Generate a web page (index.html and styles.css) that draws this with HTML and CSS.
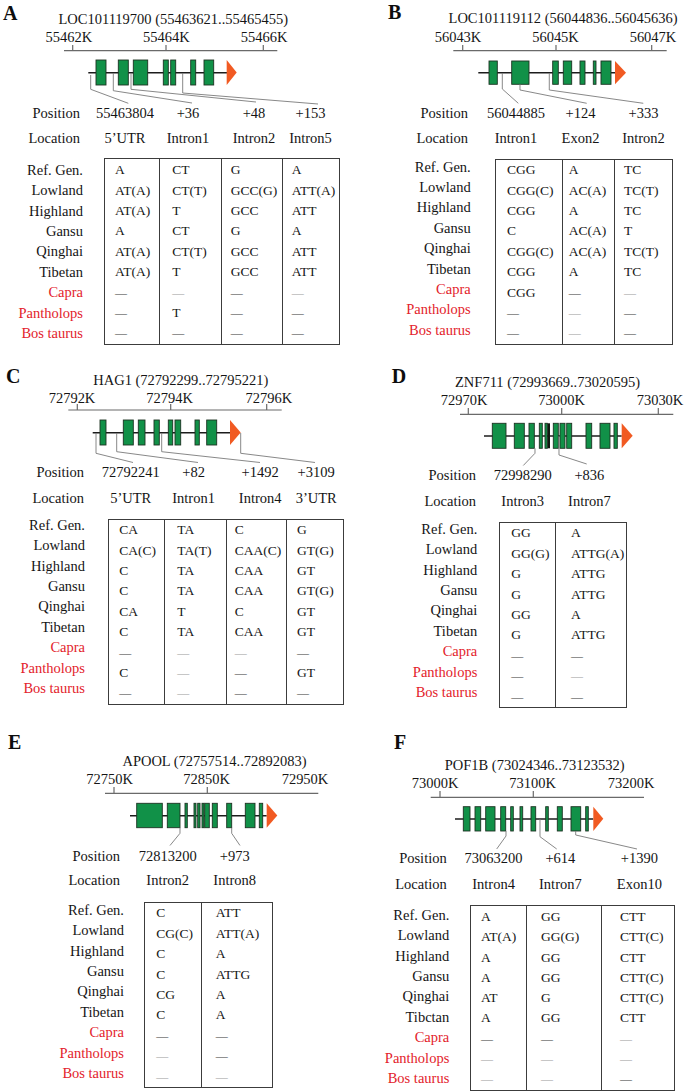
FILE: index.html
```html
<!DOCTYPE html>
<html lang="en">
<head>
<meta charset="utf-8">
<title>SNP figure</title>
<link rel="stylesheet" href="styles.css">
</head>
<body>
<div class="fig">

<!-- A -->
<section class="panel pa">
<svg class="dg" width="340" height="104" viewBox="0 0 340 104">
<text class="lt" x="3" y="20">A</text>
<text class="t" x="173.3" y="24" text-anchor="middle">LOC101119700 (55463621..55465455)</text>
<text class="t" x="68.8" y="41.5" text-anchor="middle">55462K</text>
<text class="t" x="166.3" y="41.5" text-anchor="middle">55464K</text>
<text class="t" x="264" y="41.5" text-anchor="middle">55466K</text>
<path class="ax" d="M64 50.7H277.3M72.7 45V50.7M166 45V50.7M263.3 45V50.7"/>
<path class="gl" d="M88.3 72.7H227"/>
<rect class="ex" x="96" y="60" width="10" height="25"/>
<rect class="ex" x="118.3" y="60" width="10" height="25"/>
<rect class="ex" x="133.3" y="60" width="14.4" height="25"/>
<rect class="ex" x="163.3" y="60" width="5" height="25"/>
<rect class="ex" x="170.7" y="60" width="5" height="25"/>
<rect class="ex" x="190.7" y="60" width="5" height="25"/>
<rect class="ex" x="204" y="60" width="9.7" height="25"/>
<path class="ar" d="M226.7 60L236.7 72.5L226.7 85Z"/>
<path class="cn" d="M90.7 75V89.3L128.3 103.3M113.3 73V90.7L192 103M131 73V89.3L256 102M182.7 73V93L318 104"/>
</svg>
<div class="info r1"><span class="k">Position</span><span class="v">55463804</span><span class="v">+36</span><span class="v">+48</span><span class="v">+153</span></div>
<div class="info r2"><span class="k">Location</span><span class="v">5’UTR</span><span class="v">Intron1</span><span class="v">Intron2</span><span class="v">Intron5</span></div>
<div class="sect">
<div class="labels"><div class="lab">Ref. Gen.</div><div class="lab">Lowland</div><div class="lab">Highland</div><div class="lab">Gansu</div><div class="lab">Qinghai</div><div class="lab">Tibetan</div><div class="lab red">Capra</div><div class="lab red">Pantholops</div><div class="lab red">Bos taurus</div></div>
<div class="tbl">
<div class="col"><div class="c">A</div><div class="c">AT(A)</div><div class="c">AT(A)</div><div class="c">A</div><div class="c">AT(A)</div><div class="c">AT(A)</div><div class="c"><span class="d">—</span></div><div class="c"><span class="d">—</span></div><div class="c"><span class="d">—</span></div></div>
<div class="col"><div class="c">CT</div><div class="c">CT(T)</div><div class="c">T</div><div class="c">CT</div><div class="c">CT(T)</div><div class="c">T</div><div class="c"><span class="d dl">—</span></div><div class="c">T</div><div class="c"><span class="d">—</span></div></div>
<div class="col"><div class="c">G</div><div class="c">GCC(G)</div><div class="c">GCC</div><div class="c">G</div><div class="c">GCC</div><div class="c">GCC</div><div class="c"><span class="d">—</span></div><div class="c"><span class="d">—</span></div><div class="c"><span class="d">—</span></div></div>
<div class="col"><div class="c">A</div><div class="c">ATT(A)</div><div class="c">ATT</div><div class="c">A</div><div class="c">ATT</div><div class="c">ATT</div><div class="c"><span class="d dl">—</span></div><div class="c"><span class="d">—</span></div><div class="c"><span class="d">—</span></div></div>
</div>
</div>
</section>

<!-- B -->
<section class="panel pb">
<svg class="dg" width="345" height="104.4" viewBox="0 0 345 104.4">
<text class="lt" x="48" y="19">B</text>
<text class="t" x="223" y="23.5" text-anchor="middle">LOC101119112 (56044836..56045636)</text>
<text class="t" x="118" y="41.7" text-anchor="middle">56043K</text>
<text class="t" x="215.5" y="41.7" text-anchor="middle">56045K</text>
<text class="t" x="313" y="41.7" text-anchor="middle">56047K</text>
<path class="ax" d="M113.3 50.7H326.7M122.7 45V50.7M216 45V50.7M311.7 45V50.7"/>
<path class="gl" d="M138.3 72.7H275"/>
<rect class="ex" x="149" y="61" width="8.3" height="23.3"/>
<rect class="ex" x="171.7" y="61" width="17.3" height="23.3"/>
<rect class="ex" x="212.7" y="61" width="5.6" height="23.3"/>
<rect class="ex" x="223.3" y="61" width="8.4" height="23.3"/>
<rect class="ex" x="240" y="61" width="5" height="23.3"/>
<rect class="ex" x="253.3" y="61" width="2.7" height="23.3"/>
<rect class="ex" x="261" y="61" width="10" height="23.3"/>
<path class="ar" d="M275 61L286 72.7L275 84.3Z"/>
<path class="cn" d="M162.3 73V89L178.3 103.3M180 84.3V90L246.7 103.3M209.3 73V90L303.3 103.3"/>
</svg>
<div class="info r1"><span class="k">Position</span><span class="v">56044885</span><span class="v">+124</span><span class="v">+333</span></div>
<div class="info r2"><span class="k">Location</span><span class="v">Intron1</span><span class="v">Exon2</span><span class="v">Intron2</span></div>
<div class="sect">
<div class="labels"><div class="lab">Ref. Gen.</div><div class="lab">Lowland</div><div class="lab">Highland</div><div class="lab">Gansu</div><div class="lab">Qinghai</div><div class="lab">Tibetan</div><div class="lab red">Capra</div><div class="lab red">Pantholops</div><div class="lab red">Bos taurus</div></div>
<div class="tbl">
<div class="col"><div class="c">CGG</div><div class="c">CGG(C)</div><div class="c">CGG</div><div class="c">C</div><div class="c">CGG(C)</div><div class="c">CGG</div><div class="c">CGG</div><div class="c"><span class="d">—</span></div><div class="c"><span class="d">—</span></div></div>
<div class="col"><div class="c">A</div><div class="c">AC(A)</div><div class="c">A</div><div class="c">AC(A)</div><div class="c">AC(A)</div><div class="c">A</div><div class="c"><span class="d">—</span></div><div class="c"><span class="d dl">—</span></div><div class="c"><span class="d dl">—</span></div></div>
<div class="col"><div class="c">TC</div><div class="c">TC(T)</div><div class="c">TC</div><div class="c">T</div><div class="c">TC(T)</div><div class="c">TC</div><div class="c"><span class="d dl">—</span></div><div class="c"><span class="d">—</span></div><div class="c"><span class="d">—</span></div></div>
</div>
</div>
</section>

<!-- C -->
<section class="panel pc">
<svg class="dg" width="340" height="102.8" viewBox="0 0 340 102.8">
<text class="lt" x="6" y="23.3">C</text>
<text class="t" x="180.8" y="25" text-anchor="middle">HAG1 (72792299..72795221)</text>
<text class="t" x="72" y="42.7" text-anchor="middle">72792K</text>
<text class="t" x="169.7" y="42.7" text-anchor="middle">72794K</text>
<text class="t" x="268.8" y="42.7" text-anchor="middle">72796K</text>
<path class="ax" d="M68.3 50H281.7M77.3 44V50M170.7 44V50M266.7 44V50"/>
<path class="gl" d="M92.7 72.7H230"/>
<rect class="ex" x="100" y="60" width="6" height="25"/>
<rect class="ex" x="123.3" y="60" width="10" height="25"/>
<rect class="ex" x="138.3" y="60" width="6.7" height="25"/>
<rect class="ex" x="154" y="60" width="5.3" height="25"/>
<rect class="ex" x="168.3" y="60" width="4.4" height="25"/>
<rect class="ex" x="175" y="60" width="5.7" height="25"/>
<rect class="ex" x="195" y="60" width="4.3" height="25"/>
<rect class="ex" x="206.7" y="60" width="10" height="25"/>
<path class="ar" d="M230 60L240.7 72.5L230 85Z"/>
<path class="cn" d="M96 73V93.3L133 102.5M116.7 73V91.7L198 102.5M161.7 73V91.7L260 102.5M240.7 73V93.3L315 102.5"/>
</svg>
<div class="info r1"><span class="k">Position</span><span class="v">72792241</span><span class="v">+82</span><span class="v">+1492</span><span class="v">+3109</span></div>
<div class="info r2"><span class="k">Location</span><span class="v">5’UTR</span><span class="v">Intron1</span><span class="v">Intron4</span><span class="v">3’UTR</span></div>
<div class="sect">
<div class="labels"><div class="lab">Ref. Gen.</div><div class="lab">Lowland</div><div class="lab">Highland</div><div class="lab">Gansu</div><div class="lab">Qinghai</div><div class="lab">Tibetan</div><div class="lab red">Capra</div><div class="lab red">Pantholops</div><div class="lab red">Bos taurus</div></div>
<div class="tbl">
<div class="col"><div class="c">CA</div><div class="c">CA(C)</div><div class="c">C</div><div class="c">C</div><div class="c">CA</div><div class="c">C</div><div class="c"><span class="d">—</span></div><div class="c">C</div><div class="c"><span class="d">—</span></div></div>
<div class="col"><div class="c">TA</div><div class="c">TA(T)</div><div class="c">TA</div><div class="c">TA</div><div class="c">T</div><div class="c">TA</div><div class="c"><span class="d dl">—</span></div><div class="c"><span class="d dl">—</span></div><div class="c"><span class="d dl">—</span></div></div>
<div class="col"><div class="c">C</div><div class="c">CAA(C)</div><div class="c">CAA</div><div class="c">CAA</div><div class="c">C</div><div class="c">CAA</div><div class="c"><span class="d dl">—</span></div><div class="c"><span class="d">—</span></div><div class="c"><span class="d">—</span></div></div>
<div class="col"><div class="c">G</div><div class="c">GT(G)</div><div class="c">GT</div><div class="c">GT(G)</div><div class="c">GT</div><div class="c">GT</div><div class="c"><span class="d">—</span></div><div class="c">GT</div><div class="c"><span class="d">—</span></div></div>
</div>
</div>
</section>

<!-- D -->
<section class="panel pd">
<svg class="dg" width="345" height="106.1" viewBox="0 0 345 106.1">
<text class="lt" x="51.7" y="23.3">D</text>
<text class="t" x="207.5" y="26.7" text-anchor="middle">ZNF711 (72993669..73020595)</text>
<text class="t" x="124" y="45" text-anchor="middle">72970K</text>
<text class="t" x="221.7" y="45" text-anchor="middle">73000K</text>
<text class="t" x="320" y="45" text-anchor="middle">73030K</text>
<path class="ax" d="M120 54.3H333.3M128.3 48V54.3M221.7 48V54.3M318.3 48V54.3"/>
<path class="gl" d="M144 76H281.7"/>
<rect class="ex" x="152.3" y="63.3" width="13.7" height="25"/>
<rect class="ex" x="174.3" y="63.3" width="10" height="25"/>
<rect class="ex" x="189" y="63.3" width="5.3" height="25"/>
<rect class="ex" x="199.3" y="63.3" width="3" height="25"/>
<rect class="ex" x="205" y="63.3" width="2.3" height="25"/>
<rect class="exk" x="207.5" y="63.3" width="2.5" height="25"/>
<rect class="ex" x="213.3" y="63.3" width="5" height="25"/>
<rect class="ex" x="220" y="63.3" width="5" height="25"/>
<rect class="ex" x="226.7" y="63.3" width="5" height="25"/>
<rect class="ex" x="246" y="63.3" width="5.7" height="25"/>
<rect class="ex" x="260" y="63.3" width="10" height="25"/>
<rect class="ex" x="274" y="63.3" width="3.3" height="25"/>
<path class="ar" d="M281.7 63.3L292.7 75.8L281.7 88.3Z"/>
<path class="cn" d="M195 88.3V93.3L183.3 105.5M219 76V95L246.7 104"/>
</svg>
<div class="info r1"><span class="k">Position</span><span class="v">72998290</span><span class="v">+836</span></div>
<div class="info r2"><span class="k">Location</span><span class="v">Intron3</span><span class="v">Intron7</span></div>
<div class="sect">
<div class="labels"><div class="lab">Ref. Gen.</div><div class="lab">Lowland</div><div class="lab">Highland</div><div class="lab">Gansu</div><div class="lab">Qinghai</div><div class="lab">Tibetan</div><div class="lab red">Capra</div><div class="lab red">Pantholops</div><div class="lab red">Bos taurus</div></div>
<div class="tbl">
<div class="col"><div class="c">GG</div><div class="c">GG(G)</div><div class="c">G</div><div class="c">G</div><div class="c">GG</div><div class="c">G</div><div class="c"><span class="d">—</span></div><div class="c"><span class="d">—</span></div><div class="c"><span class="d">—</span></div></div>
<div class="col"><div class="c">A</div><div class="c">ATTG(A)</div><div class="c">ATTG</div><div class="c">ATTG</div><div class="c">A</div><div class="c">ATTG</div><div class="c"><span class="d">—</span></div><div class="c"><span class="d dl">—</span></div><div class="c"><span class="d">—</span></div></div>
</div>
</div>
</section>

<!-- E -->
<section class="panel pe">
<svg class="dg" width="340" height="121.8" viewBox="0 0 340 121.8">
<text class="lt" x="8" y="24.3">E</text>
<text class="t" x="214.5" y="41" text-anchor="middle">APOOL (72757514..72892083)</text>
<text class="t" x="109.7" y="59.3" text-anchor="middle">72750K</text>
<text class="t" x="206.7" y="59.3" text-anchor="middle">72850K</text>
<text class="t" x="305" y="59.3" text-anchor="middle">72950K</text>
<path class="ax" d="M105 68.3H318.3M114 62V68.3M207.3 62V68.3"/>
<path class="gl" d="M130 90.7H266.7"/>
<rect class="ex" x="136.7" y="78.3" width="25.6" height="24.4"/>
<rect class="ex" x="167.3" y="78.3" width="12.7" height="24.4"/>
<rect class="ex" x="185" y="78.3" width="2.3" height="24.4"/>
<rect class="ex" x="194" y="78.3" width="2" height="24.4"/>
<rect class="ex" x="197.7" y="78.3" width="2.3" height="24.4"/>
<rect class="ex" x="202" y="78.3" width="2" height="24.4"/>
<rect class="ex" x="204.7" y="78.3" width="4.6" height="24.4"/>
<rect class="ex" x="212.3" y="78.3" width="5" height="24.4"/>
<rect class="ex" x="226.7" y="78.3" width="5" height="24.4"/>
<rect class="ex" x="245.3" y="78.3" width="9.7" height="24.4"/>
<rect class="ex" x="259.3" y="78.3" width="3.4" height="24.4"/>
<path class="ar" d="M266.7 78.3L277.3 90.5L266.7 102.7Z"/>
<path class="cn" d="M180 102.7V108.3L170 120.5M231.7 102.7V108.3L240 120.5"/>
</svg>
<div class="info r1"><span class="k">Position</span><span class="v">72813200</span><span class="v">+973</span></div>
<div class="info r2"><span class="k">Location</span><span class="v">Intron2</span><span class="v">Intron8</span></div>
<div class="sect">
<div class="labels"><div class="lab">Ref. Gen.</div><div class="lab">Lowland</div><div class="lab">Highland</div><div class="lab">Gansu</div><div class="lab">Qinghai</div><div class="lab">Tibetan</div><div class="lab red">Capra</div><div class="lab red">Pantholops</div><div class="lab red">Bos taurus</div></div>
<div class="tbl">
<div class="col"><div class="c">C</div><div class="c">CG(C)</div><div class="c">C</div><div class="c">C</div><div class="c">CG</div><div class="c">C</div><div class="c"><span class="d">—</span></div><div class="c"><span class="d dl">—</span></div><div class="c"><span class="d dl">—</span></div></div>
<div class="col"><div class="c">ATT</div><div class="c">ATT(A)</div><div class="c">A</div><div class="c">ATTG</div><div class="c">A</div><div class="c">A</div><div class="c"><span class="d">—</span></div><div class="c"><span class="d">—</span></div><div class="c"><span class="d dl">—</span></div></div>
</div>
</div>
</section>

<!-- F -->
<section class="panel pf">
<svg class="dg" width="345" height="124.4" viewBox="0 0 345 124.4">
<text class="lt" x="54" y="24.3">F</text>
<text class="t" x="194.7" y="45" text-anchor="middle">POF1B (73024346..73123532)</text>
<text class="t" x="95" y="63.3" text-anchor="middle">73000K</text>
<text class="t" x="192.7" y="63.3" text-anchor="middle">73100K</text>
<text class="t" x="291.2" y="63.3" text-anchor="middle">73200K</text>
<path class="ax" d="M90.7 72.3H304M100 66V72.3M193.3 66V72.3"/>
<path class="gl" d="M115 94H253.3"/>
<rect class="ex" x="123.3" y="81.7" width="6.7" height="24.3"/>
<rect class="ex" x="135" y="81.7" width="5.7" height="24.3"/>
<rect class="ex" x="145.7" y="81.7" width="9.3" height="24.3"/>
<rect class="ex" x="160.7" y="81.7" width="5" height="24.3"/>
<rect class="ex" x="170.7" y="81.7" width="2.6" height="24.3"/>
<rect class="ex" x="180" y="81.7" width="2.7" height="24.3"/>
<rect class="ex" x="191" y="81.7" width="4.7" height="24.3"/>
<rect class="ex" x="205.7" y="81.7" width="2.6" height="24.3"/>
<rect class="ex" x="217.3" y="81.7" width="5" height="24.3"/>
<rect class="ex" x="231" y="81.7" width="9.7" height="24.3"/>
<rect class="ex" x="245.7" y="81.7" width="2.6" height="24.3"/>
<path class="ar" d="M253.3 81.7L263.3 93.8L253.3 106Z"/>
<path class="cn" d="M166 106V111L156.7 124M200 94V111.7L216.7 124M235.7 106V110L297 124"/>
</svg>
<div class="info r1"><span class="k">Position</span><span class="v">73063200</span><span class="v">+614</span><span class="v">+1390</span></div>
<div class="info r2"><span class="k">Location</span><span class="v">Intron4</span><span class="v">Intron7</span><span class="v">Exon10</span></div>
<div class="sect">
<div class="labels"><div class="lab">Ref. Gen.</div><div class="lab">Lowland</div><div class="lab">Highland</div><div class="lab">Gansu</div><div class="lab">Qinghai</div><div class="lab">Tibctan</div><div class="lab red">Capra</div><div class="lab red">Pantholops</div><div class="lab red">Bos taurus</div></div>
<div class="tbl">
<div class="col"><div class="c">A</div><div class="c">AT(A)</div><div class="c">A</div><div class="c">A</div><div class="c">AT</div><div class="c">A</div><div class="c"><span class="d">—</span></div><div class="c"><span class="d dl">—</span></div><div class="c"><span class="d dl">—</span></div></div>
<div class="col"><div class="c">GG</div><div class="c">GG(G)</div><div class="c">GG</div><div class="c">GG</div><div class="c">G</div><div class="c">GG</div><div class="c"><span class="d">—</span></div><div class="c"><span class="d dl">—</span></div><div class="c"><span class="d dl">—</span></div></div>
<div class="col"><div class="c">CTT</div><div class="c">CTT(C)</div><div class="c">CTT</div><div class="c">CTT(C)</div><div class="c">CTT(C)</div><div class="c">CTT</div><div class="c"><span class="d dl">—</span></div><div class="c"><span class="d dl">—</span></div><div class="c"><span class="d">—</span></div></div>
</div>
</div>
</section>

</div>
</body>
</html>
```

FILE: styles.css
```css
html, body {
  margin: 0;
  padding: 0;
  background: #ffffff;
}

.fig {
  display: grid;
  grid-template-columns: 340px 345px;
  grid-template-rows: 360px 365px 367px;
  width: 685px;
  height: 1092px;
  overflow: hidden;
  font-family: "Liberation Serif", "Times New Roman", serif;
  color: #151515;
}

.panel {
  display: flex;
  flex-direction: column;
  font-size: 14.5px;
  min-width: 0;
}

.dg {
  display: block;
  overflow: visible;
}

.dg .t {
  font-family: "Liberation Serif", "Times New Roman", serif;
  font-size: 14.5px;
  fill: #151515;
}

.dg .lt {
  font-family: "Liberation Serif", "Times New Roman", serif;
  font-size: 20px;
  font-weight: bold;
  fill: #0d0d0d;
}

.ax {
  fill: none;
  stroke: #6a6a6a;
  stroke-width: 1.2;
}

.gl {
  fill: none;
  stroke: #1c1c1c;
  stroke-width: 1.6;
}

.ex {
  fill: #119148;
  stroke: #1d3323;
  stroke-width: 0.9;
}

.exk {
  fill: #101810;
  stroke: none;
}

.ar {
  fill: #f15a22;
  stroke: none;
}

.cn {
  fill: none;
  stroke: #7b7b7b;
  stroke-width: 0.9;
}

/* Position / Location rows */
.info {
  display: grid;
  height: 18px;
  line-height: 18px;
  white-space: nowrap;
}

.info .k {
  text-align: right;
  padding-right: 24px;
}

.info .v {
  display: flex;
  justify-content: center;
  white-space: nowrap;
}

/* Genotype table */
.sect {
  display: flex;
  align-items: flex-start;
}

.labels {
  flex: none;
  text-align: right;
}

.lab {
  height: 20.4px;
  line-height: 20.4px;
  white-space: nowrap;
}

.red {
  color: #e3222b;
}

.tbl {
  display: flex;
  flex: none;
  border: 1px solid #3c3c3c;
}

.col {
  box-sizing: border-box;
  flex: none;
}

.col + .col {
  border-left: 1px solid #3c3c3c;
}

.c {
  height: 20.4px;
  line-height: 20.4px;
  font-size: 13.5px;
  white-space: nowrap;
}

.d {
  font-size: 12px;
  color: #3a3a3a;
}

.dl {
  color: #9a9a9a;
}

/* ---- Panel A ---- */
.pa .info { grid-template-columns: 104px 42px 84px 48px 65px; }
.pa .info .k { padding-right: 24px; }
.pa .r2 { margin-top: 7.1px; }
.pa .sect { margin-top: 11.2px; }
.pa .labels { width: 83px; margin-right: 21px; margin-top: 1.6px; }
.pa .col { padding-top: 0.9px; }
.pa .col:nth-child(1) { width: 54.3px; padding-left: 10px; }
.pa .col:nth-child(2) { width: 61.4px; padding-left: 12px; }
.pa .col:nth-child(3) { width: 61px; padding-left: 9px; }
.pa .col:nth-child(4) { width: 57.3px; padding-left: 9px; }

/* ---- Panel B ---- */
.pb .info { grid-template-columns: 155px 42px 87px 39px; }
.pb .info .k { padding-right: 27px; }
.pb .r2 { margin-top: 6.4px; }
.pb .sect { margin-top: 12.5px; }
.pb .labels { width: 130.7px; margin-right: 24.3px; margin-top: -2.7px; }
.pb .col { padding-top: 0; }
.pb .col:nth-child(1) { width: 65.7px; padding-left: 11px; }
.pb .col:nth-child(2) { width: 52.3px; padding-left: 6px; }
.pb .col:nth-child(3) { width: 58.3px; padding-left: 9px; }

/* ---- Panel C ---- */
.pc .info { grid-template-columns: 108px 45.4px 80.4px 52.8px 59.2px; }
.pc .info .k { padding-right: 24px; }
.pc .r2 { margin-top: 8.6px; }
.pc .sect { margin-top: 11.9px; }
.pc .labels { width: 85px; margin-right: 23.3px; margin-top: -4.4px; }
.pc .col { padding-top: 0; }
.pc .col:nth-child(1) { width: 55px; padding-left: 10px; }
.pc .col:nth-child(2) { width: 61.4px; padding-left: 12px; }
.pc .col:nth-child(3) { width: 60.3px; padding-left: 8px; }
.pc .col:nth-child(4) { width: 57.3px; padding-left: 10px; }

/* ---- Panel D ---- */
.pd .info { grid-template-columns: 159px 47.4px 86px; }
.pd .info .k { padding-right: 23px; }
.pd .r2 { margin-top: 8px; }
.pd .sect { margin-top: 11.6px; }
.pd .labels { width: 137.3px; margin-right: 22px; margin-top: -2.8px; }
.pd .col { padding-top: 0.8px; }
.pd .col:nth-child(1) { width: 54.7px; padding-left: 11px; }
.pd .col:nth-child(2) { width: 71.3px; padding-left: 15px; }

/* ---- Panel E ---- */
.pe .info { grid-template-columns: 144px 47.4px 86.6px; }
.pe .info .k { padding-right: 24px; }
.pe .r2 { margin-top: 6.3px; }
.pe .sect { margin-top: 13.2px; }
.pe .labels { width: 124px; margin-right: 20.3px; margin-top: -2.4px; }
.pe .col { padding-top: 0.2px; }
.pe .col:nth-child(1) { width: 55.4px; padding-left: 11px; }
.pe .col:nth-child(2) { width: 71px; padding-left: 14px; }

/* ---- Panel F ---- */
.pf .info { grid-template-columns: 130px 47.2px 86.4px 71.6px; }
.pf .info .k { padding-right: 23.3px; }
.pf .r2 { margin-top: 8px; }
.pf .sect { margin-top: 11.6px; }
.pf .labels { width: 109.3px; margin-right: 20.7px; margin-top: -0.1px; }
.pf .col { padding-top: 1px; }
.pf .col:nth-child(1) { width: 55px; padding-left: 10px; }
.pf .col:nth-child(2) { width: 75px; padding-left: 14px; }
.pf .col:nth-child(3) { width: 73px; padding-left: 18px; }
.pf .c { height: 20.3px; line-height: 20.3px; }
```
